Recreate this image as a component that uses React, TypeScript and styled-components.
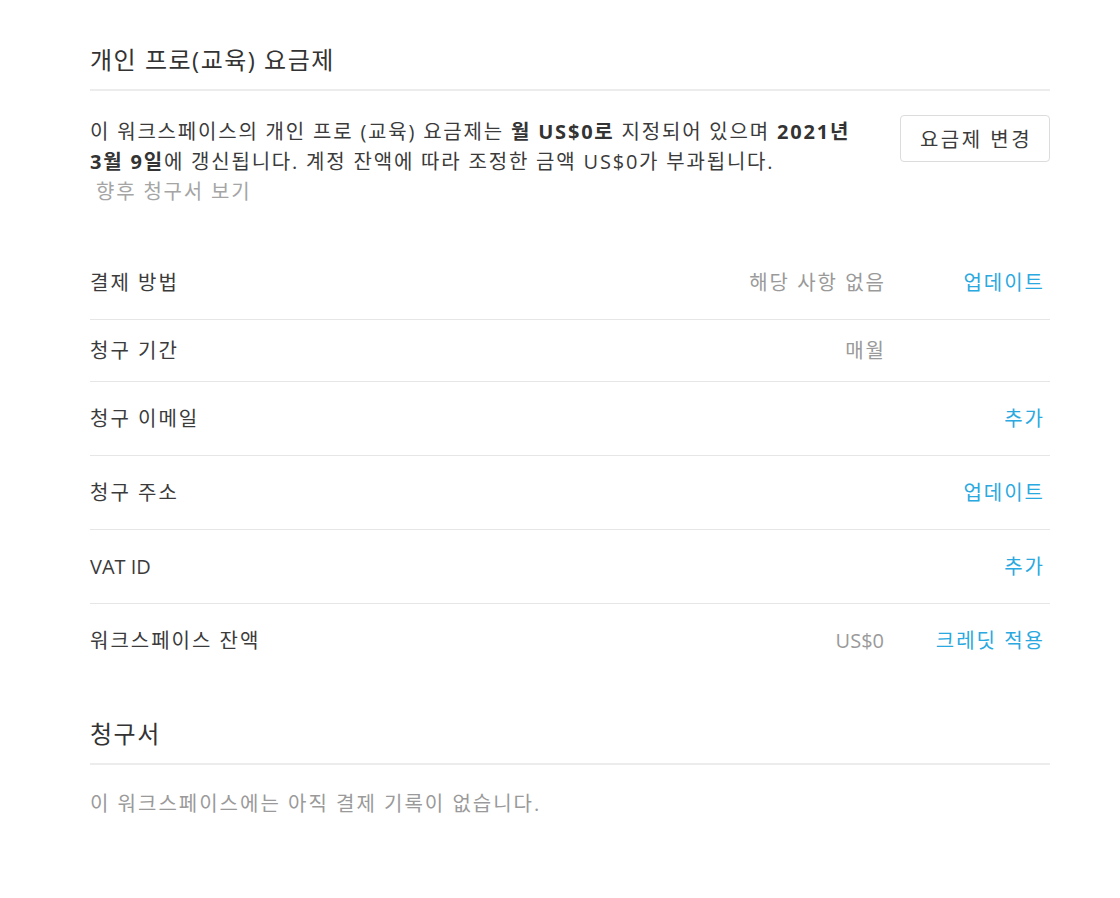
import React from "react";
import styled, { createGlobalStyle } from "styled-components";

const Global = createGlobalStyle`
  html, body { margin: 0; padding: 0; background: #ffffff; }
  body { font-family: "Open Sans", "Noto Sans CJK KR", sans-serif; color: #3b3b3b; }
`;

const Page = styled.div`
  padding: 44px 70px 60px 90px;
  width: 960px;
`;

const SectionTitle = styled.h2<{ $top?: number }>`
  margin: ${(p) => p.$top ?? 0}px 0 0 0;
  padding: 0 0 13px 0;
  font-size: 24px;
  line-height: 32px;
  font-weight: 400;
  letter-spacing: 1.5px;
  color: #333333;
  border-bottom: 2px solid #ececec;
`;

const PlanBlock = styled.div`
  display: flex;
  align-items: flex-start;
  justify-content: space-between;
  gap: 40px;
  margin-top: 24px;
`;

const PlanText = styled.p`
  margin: 2px 0 0 0;
  font-size: 20px;
  line-height: 30px;
  letter-spacing: 1.8px;
  color: #3b3b3b;
  flex: 1;
  strong { font-weight: 700; color: #333; }
`;

const FutureLink = styled.span`
  display: block;
  padding-left: 6px;
  color: #a5a5a5;
`;

const OutlineButton = styled.button`
  flex: 0 0 150px;
  height: 47px;
  background: #fff;
  border: 1px solid #dcdcdc;
  border-radius: 4px;
  font-family: inherit;
  font-size: 20px;
  letter-spacing: 2.5px;
  padding: 0 0 0 2px;
  color: #3b3b3b;
  cursor: pointer;
`;

const Rows = styled.div`
  margin-top: 39px;
  display: flex;
  flex-direction: column;
`;

const Row = styled.div<{ $last?: boolean }>`
  display: flex;
  align-items: center;
  padding: 15px 0;
  border-bottom: ${(p) => (p.$last ? "none" : "1px solid #e6e6e6")};
`;

const Label = styled.div<{ $latin?: boolean }>`
  flex: 1;
  font-size: 20px;
  line-height: 30px;
  letter-spacing: ${(p) => (p.$latin ? "0" : "2px")};
  color: #3b3b3b;
`;

const Value = styled.div<{ $latin?: boolean }>`
  font-size: 20px;
  line-height: 30px;
  letter-spacing: ${(p) => (p.$latin ? "0" : "2px")};
  margin-right: ${(p) => (p.$latin ? "0" : "-2px")};
  color: #9a9a9a;
  text-align: right;
`;

const Action = styled.div`
  flex: 0 0 166px;
  min-height: 31px;
  display: flex;
  justify-content: flex-end;
`;

const LinkButton = styled.a`
  display: inline-block;
  padding: 6px 5px 6px 7px;
  font-size: 20px;
  line-height: 31px;
  letter-spacing: 2px;
  color: #2aa9e0;
  text-decoration: none;
  cursor: pointer;
`;

const EmptyNote = styled.p`
  margin: 24px 0 0 0;
  font-size: 20px;
  line-height: 30px;
  letter-spacing: 2px;
  color: #9a9a9a;
`;

type RowData = { label: string; value?: string; action?: string };

const isLatin = (s?: string) => !!s && /^[\x00-\x7F]+$/.test(s);

const rows: RowData[] = [
  { label: "결제 방법", value: "해당 사항 없음", action: "업데이트" },
  { label: "청구 기간", value: "매월" },
  { label: "청구 이메일", action: "추가" },
  { label: "청구 주소", action: "업데이트" },
  { label: "VAT ID", action: "추가" },
  { label: "워크스페이스 잔액", value: "US$0", action: "크레딧 적용" },
];

export default function App() {
  return (
    <>
      <Global />
      <Page>
        <SectionTitle>개인 프로(교육) 요금제</SectionTitle>
        <PlanBlock>
          <PlanText>
            이 워크스페이스의 개인 프로 (교육) 요금제는 <strong>월 US$0로</strong> 지정되어 있으며{" "}
            <strong>2021년 3월 9일</strong>에 갱신됩니다. 계정 잔액에 따라 조정한 금액 US$0가 부과됩니다.
            <FutureLink>향후 청구서 보기</FutureLink>
          </PlanText>
          <OutlineButton>요금제 변경</OutlineButton>
        </PlanBlock>
        <Rows>
          {rows.map((r, i) => (
            <Row key={r.label} $last={i === rows.length - 1}>
              <Label $latin={isLatin(r.label)}>{r.label}</Label>
              {r.value && <Value $latin={isLatin(r.value)}>{r.value}</Value>}
              <Action>{r.action && <LinkButton>{r.action}</LinkButton>}</Action>
            </Row>
          ))}
        </Rows>
        <SectionTitle $top={41}>청구서</SectionTitle>
        <EmptyNote>이 워크스페이스에는 아직 결제 기록이 없습니다.</EmptyNote>
      </Page>
    </>
  );
}
